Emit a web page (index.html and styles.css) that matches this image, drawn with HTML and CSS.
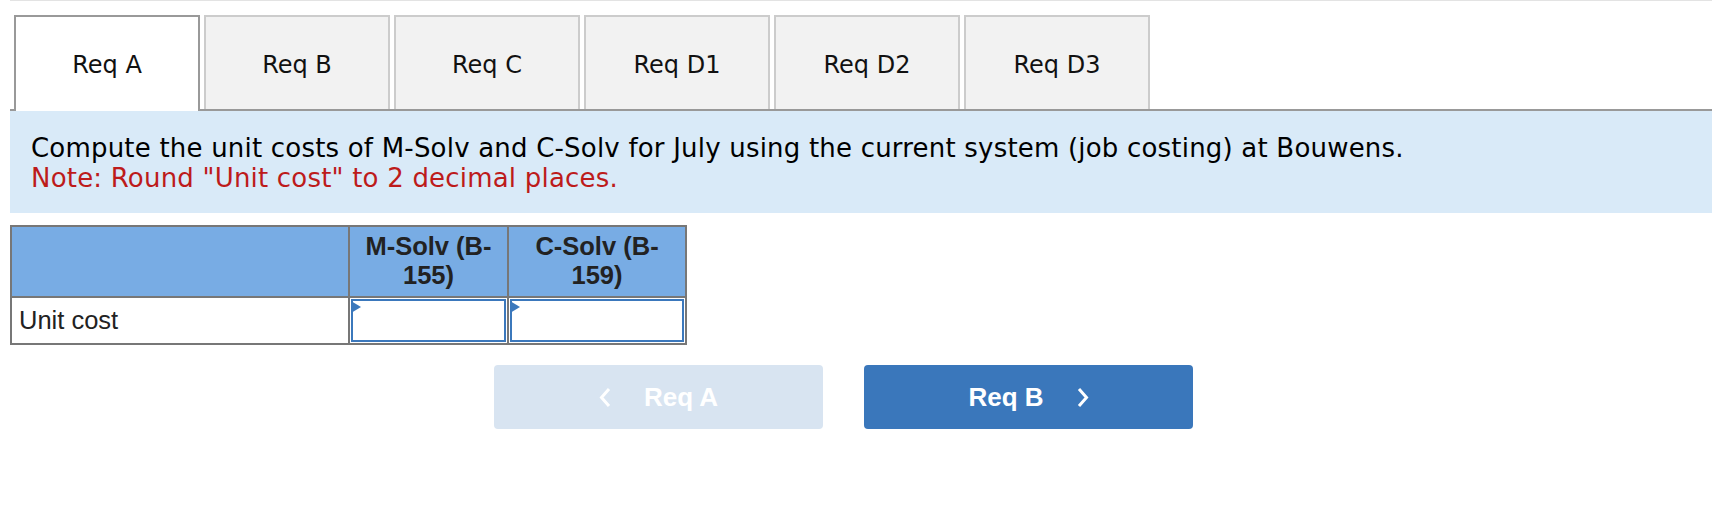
FILE: index.html
```html
<!DOCTYPE html>
<html lang="en">
<head>
  <meta charset="UTF-8" />
  <title>Req A</title>
  <link rel="stylesheet" href="styles.css">
</head>
<body>
  <div class="page">
    <div class="topline"></div>

    <div class="tabs">
      <div class="tab active">Req A</div>
      <div class="tab">Req B</div>
      <div class="tab">Req C</div>
      <div class="tab">Req D1</div>
      <div class="tab">Req D2</div>
      <div class="tab">Req D3</div>
    </div>

    <div class="instructions">
      <p>Compute the unit costs of M-Solv and C-Solv for July using the current system (job costing) at Bouwens.</p>
      <p class="note">Note: Round "Unit cost" to 2 decimal places.</p>
    </div>

    <table class="answer">
      <colgroup>
        <col class="c1">
        <col class="c2">
        <col class="c3">
      </colgroup>
      <tr>
        <th></th>
        <th>M-Solv (B-<br>155)</th>
        <th>C-Solv (B-<br>159)</th>
      </tr>
      <tr>
        <td class="label">Unit cost</td>
        <td class="entry"><div class="field"><input type="text"></div></td>
        <td class="entry"><div class="field"><input type="text"></div></td>
      </tr>
    </table>

    <div class="nav">
      <button class="btn prev" disabled>
        <svg width="12" height="21" viewBox="0 0 12 21"><polyline points="10,2 2.5,10.5 10,19" fill="none" stroke="#fff" stroke-width="3"/></svg>
        <span>Req A</span>
      </button>
      <button class="btn next">
        <span>Req B</span>
        <svg width="12" height="21" viewBox="0 0 12 21"><polyline points="2,2 9.5,10.5 2,19" fill="none" stroke="#fff" stroke-width="3"/></svg>
      </button>
    </div>
  </div>
</body>
</html>
```

FILE: styles.css
```css
body {
  margin: 0;
  background: #fff;
  font-family: "DejaVu Sans", Verdana, sans-serif;
}
.page {
  padding: 0 9px 0 10px;
}
.topline {
  height: 1px;
  background: #e3e3e3;
}

.tabs {
  display: flex;
  align-items: flex-end;
  gap: 4px;
  margin-top: 14px;
  padding-left: 4px;
  border-bottom: 2px solid #999;
}
.tab {
  box-sizing: border-box;
  width: 186px;
  height: 94px;
  border: 2px solid #ccc;
  border-bottom: none;
  background: #f2f2f2;
  color: #111;
  font-size: 24px;
  display: flex;
  align-items: center;
  justify-content: center;
  padding-top: 3px;
}
.tab.active {
  height: 96px;
  margin-bottom: -2px;
  border-color: #999;
  background: #fff;
  padding-bottom: 2px;
}

.instructions {
  background: #d9eaf8;
  padding: 22px 21px 20px;
  font-size: 26px;
  letter-spacing: 0.2px;
  line-height: 30px;
  color: #000;
}
.instructions p { margin: 0; }
.instructions .note { color: #bd1b1b; }

.answer {
  margin-top: 12px;
  border-collapse: collapse;
  table-layout: fixed;
  width: 675px;
  font-family: "Liberation Sans", Arial, sans-serif;
  font-size: 25.5px;
}
.answer .c1 { width: 338px; }
.answer .c2 { width: 159px; }
.answer .c3 { width: 178px; }
.answer th, .answer td {
  border: 2px solid #777;
}
.answer th {
  background: #78ace4;
  color: #222;
  font-weight: bold;
  line-height: 29px;
  padding: 5px 4px 6px;
  text-align: center;
}
.answer td.label {
  height: 42px;
  padding: 0 7px;
  color: #222;
  background: #fff;
}
.answer td.entry {
  padding: 1px;
  background: #fff;
}
.field {
  position: relative;
}
.field::before {
  content: "";
  position: absolute;
  left: 0;
  top: 2px;
  border-left: 10px solid #3b78bc;
  border-top: 6px solid transparent;
  border-bottom: 6px solid transparent;
}
.field input {
  display: block;
  box-sizing: border-box;
  width: 100%;
  height: 43px;
  margin: 0;
  border: 2px solid #3b78bc;
  background: #fff;
  font-size: 20px;
  outline: none;
}

.nav {
  display: flex;
  justify-content: center;
  gap: 41px;
  margin-top: 20px;
  padding-right: 35px;
}
.btn {
  width: 329px;
  height: 64px;
  border: none;
  border-radius: 4px;
  color: #fff;
  font-family: "Liberation Sans", Arial, sans-serif;
  font-size: 26px;
  font-weight: bold;
  display: flex;
  align-items: center;
  justify-content: center;
  gap: 33px;
  padding: 0;
}
.btn svg { display: block; }
.btn.prev { background: #d8e4f1; }
.btn.next { background: #3a77bb; }
```
